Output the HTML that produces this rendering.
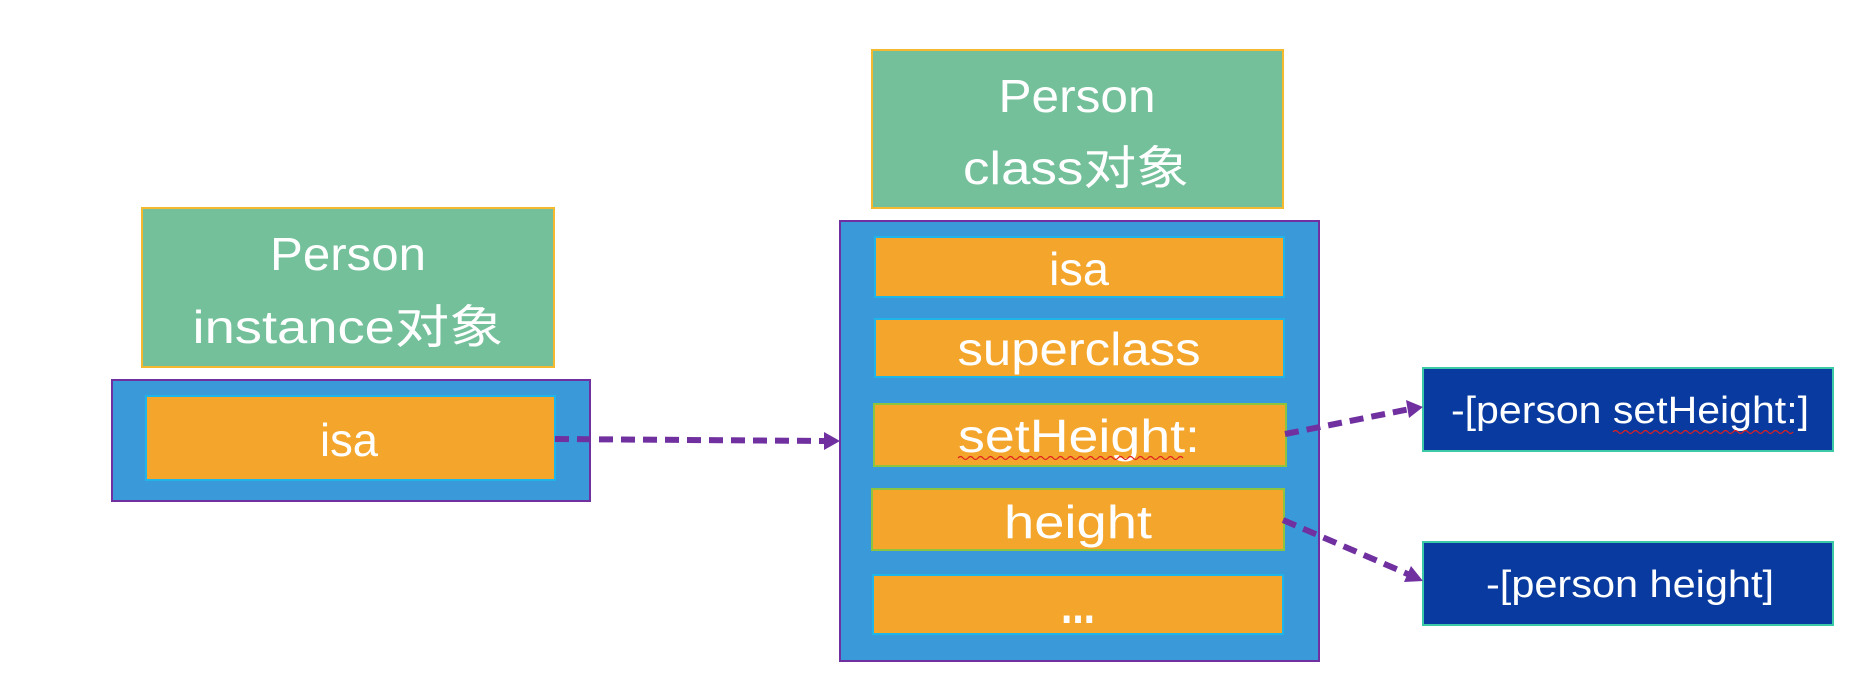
<!DOCTYPE html>
<html><head><meta charset="utf-8"><style>html,body{margin:0;padding:0;background:#fff}svg{display:block}</style></head>
<body>
<svg width="1852" height="678" viewBox="0 0 1852 678" xmlns="http://www.w3.org/2000/svg" font-family="'Liberation Sans','Noto Sans CJK SC',sans-serif" fill="#fff">
<!-- left -->
<rect x="142" y="208" width="412" height="159" fill="#73C09A" stroke="#F5B92F" stroke-width="2"/>
<text x="348" y="270" font-size="46" text-anchor="middle" textLength="156" lengthAdjust="spacingAndGlyphs">Person</text>
<text x="348" y="343" font-size="46" text-anchor="middle" textLength="311" lengthAdjust="spacingAndGlyphs">instance对象</text>
<rect x="112" y="380" width="478" height="121" fill="#3A9AD9" stroke="#7030A0" stroke-width="2"/>
<rect x="146" y="396" width="409" height="84" fill="#F4A62C" stroke="#1FB5E8" stroke-width="2"/>
<text x="349" y="456" font-size="46" text-anchor="middle" textLength="58" lengthAdjust="spacingAndGlyphs">isa</text>
<!-- right class -->
<rect x="872" y="50" width="411" height="158" fill="#73C09A" stroke="#F5B92F" stroke-width="2"/>
<text x="1077" y="112" font-size="46" text-anchor="middle" textLength="157" lengthAdjust="spacingAndGlyphs">Person</text>
<text x="1076" y="184" font-size="46" text-anchor="middle" textLength="226" lengthAdjust="spacingAndGlyphs">class对象</text>
<rect x="840" y="221" width="479" height="440" fill="#3A9AD9" stroke="#7030A0" stroke-width="2"/>
<rect x="875" y="237" width="409" height="60" fill="#F4A62C" stroke="#1FB5E8" stroke-width="2"/>
<text x="1079" y="285" font-size="46" text-anchor="middle" textLength="60" lengthAdjust="spacingAndGlyphs">isa</text>
<rect x="875" y="319" width="409" height="58" fill="#F4A62C" stroke="#1FB5E8" stroke-width="2"/>
<text x="1079" y="365" font-size="46" text-anchor="middle" textLength="243" lengthAdjust="spacingAndGlyphs">superclass</text>
<rect x="874" y="404" width="412" height="62" fill="#F4A62C" stroke="#8CC43F" stroke-width="2"/>
<text x="1079" y="452" font-size="46" text-anchor="middle" textLength="242" lengthAdjust="spacingAndGlyphs">setHeight:</text>
<path d="M958 458 q2.5 -3 5 0 t5 0 t5 0 t5 0 t5 0 t5 0 t5 0 t5 0 t5 0 t5 0 t5 0 t5 0 t5 0 t5 0 t5 0 t5 0 t5 0 t5 0 t5 0 t5 0 t5 0 t5 0 t5 0 t5 0 t5 0 t5 0 t5 0 t5 0 t5 0 t5 0 t5 0 t5 0 t5 0 t5 0 t5 0 t5 0 t5 0 t5 0 t5 0 t5 0 t5 0 t5 0 t5 0 t5 0 t5 0" fill="none" stroke="#E02020" stroke-width="1.2"/>
<rect x="872" y="489" width="412" height="61" fill="#F4A62C" stroke="#8CC43F" stroke-width="2"/>
<text x="1078" y="538" font-size="46" text-anchor="middle" textLength="148" lengthAdjust="spacingAndGlyphs">height</text>
<rect x="873" y="575" width="410" height="59" fill="#F4A62C" stroke="#1FB5E8" stroke-width="2"/>
<text x="1078" y="623" font-size="50" font-weight="bold" text-anchor="middle" textLength="34" lengthAdjust="spacingAndGlyphs">...</text>
<!-- method boxes -->
<rect x="1423" y="368" width="410" height="83" fill="#083A9F" stroke="#3CC9A8" stroke-width="2"/>
<text x="1630" y="423" font-size="38" text-anchor="middle" textLength="358" lengthAdjust="spacingAndGlyphs">-[person setHeight:]</text>
<path d="M1613 432 q2.5 -3 5 0 t5 0 t5 0 t5 0 t5 0 t5 0 t5 0 t5 0 t5 0 t5 0 t5 0 t5 0 t5 0 t5 0 t5 0 t5 0 t5 0 t5 0 t5 0 t5 0 t5 0 t5 0 t5 0 t5 0 t5 0 t5 0 t5 0 t5 0 t5 0 t5 0 t5 0 t5 0 t5 0 t5 0 t5 0 t5 0" fill="none" stroke="#E02020" stroke-width="1.2"/>
<rect x="1423" y="542" width="410" height="83" fill="#083A9F" stroke="#3CC9A8" stroke-width="2"/>
<text x="1630" y="597" font-size="38" text-anchor="middle" textLength="288" lengthAdjust="spacingAndGlyphs">-[person height]</text>
<!-- arrows -->
<g stroke="#7030A0" stroke-width="6" fill="none" stroke-dasharray="14 8">
<line x1="555" y1="439" x2="826" y2="441"/>
<line x1="1285" y1="434" x2="1410" y2="409"/>
<line x1="1283" y1="520" x2="1410" y2="575"/>
</g>
<path d="M824 432 L840 441 L824 450 z" fill="#7030A0"/>
<path d="M1406 400 L1423 407 L1409 418 z" fill="#7030A0"/>
<path d="M1411 566 L1423 581 L1404 582 z" fill="#7030A0"/>
</svg>
</body></html>
